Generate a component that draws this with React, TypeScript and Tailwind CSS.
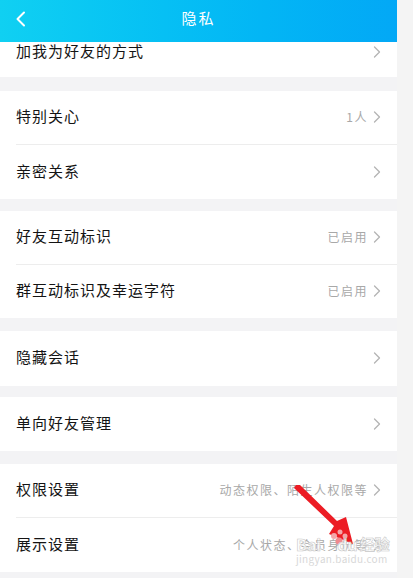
import React from 'react';

interface Row {
  label: string;
  value?: string;
  h: string;
}

const Chevron: React.FC<{ color?: string }> = ({ color = '#b4b4b4' }) => (
  <svg width="8" height="12" viewBox="0 0 8 12" fill="none" className="shrink-0">
    <path d="M1.5 1 L6.5 6 L1.5 11" stroke={color} strokeWidth="1.3" strokeLinecap="round" strokeLinejoin="round" />
  </svg>
);

const SettingRow: React.FC<{ row: Row; divider?: boolean }> = ({ row, divider }) => (
  <div className="relative">
    <div className={`flex items-center justify-between pl-4 pr-4 pb-[3px] ${row.h}`}>
      <span className="text-[15px] tracking-[1px] text-[#141414] leading-5">{row.label}</span>
      <div className="flex items-center gap-[5px] pt-[2px]">
        {row.value && <span className="text-[12px] tracking-[1.5px] text-[#a8a8a8] leading-4">{row.value}</span>}
        <Chevron />
      </div>
    </div>
    {divider && <div className="ml-4 h-px bg-[#ededed]" />}
  </div>
);

const Section: React.FC<{ rows: Row[]; gap: string }> = ({ rows, gap }) => (
  <div className={`bg-white ${gap}`}>
    {rows.map((r, i) => (
      <SettingRow key={r.label} row={r} divider={i < rows.length - 1} />
    ))}
  </div>
);

const App: React.FC = () => {
  return (
    <div
      className="relative flex w-[413px] h-[578px] overflow-hidden bg-[#f3f3f5]"
      style={{ fontFamily: '"Noto Sans CJK SC", "Noto Sans", sans-serif' }}
    >
      <div className="w-[397px] flex flex-col">
        {/* header */}
        <div className="relative h-[42px] flex items-center justify-center pb-[5px] bg-gradient-to-r from-[#10d0f2] to-[#03a8f6]">
          <svg width="12" height="16" viewBox="0 0 12 16" fill="none" className="absolute left-[15px] top-[11px]">
            <path d="M9 1.5 L2.5 8 L9 14.5" stroke="white" strokeWidth="2" strokeLinecap="round" strokeLinejoin="round" />
          </svg>
          <span className="text-white text-[15px] tracking-[2px]">隐私</span>
        </div>

        {/* partially scrolled row */}
        <div className="bg-white h-[36px] flex items-start justify-between pl-4 pr-4 -mt-px">
          <span className="text-[15px] tracking-[1px] text-[#141414] leading-5">加我为好友的方式</span>
          <div className="h-5 flex items-center pt-[2px]">
            <Chevron />
          </div>
        </div>

        <Section
          gap="mt-[14px]"
          rows={[
            { label: '特别关心', value: '1人', h: 'h-[53px]' },
            { label: '亲密关系', h: 'h-[54px]' },
          ]}
        />
        <Section
          gap="mt-[12px]"
          rows={[
            { label: '好友互动标识', value: '已启用', h: 'h-[53px]' },
            { label: '群互动标识及幸运字符', value: '已启用', h: 'h-[53px]' },
          ]}
        />
        <Section gap="mt-[13px]" rows={[{ label: '隐藏会话', h: 'h-[55px]' }]} />
        <Section gap="mt-[11px]" rows={[{ label: '单向好友管理', h: 'h-[54px]' }]} />
        <Section
          gap="mt-[13px]"
          rows={[
            { label: '权限设置', value: '动态权限、陌生人权限等', h: 'h-[53px]' },
            { label: '展示设置', value: '个人状态、会员身份等', h: 'h-[54px]' },
          ]}
        />
      </div>
      <div className="flex-1 bg-[#f4f4f4]" />

      {/* annotation arrow */}
      <svg width="413" height="578" viewBox="0 0 413 578" className="absolute inset-0 pointer-events-none">
        <polygon points="296,485 300,485 337,521 346,517 353,544 329,534 334,526 294,488" fill="#ec1c24" />
        <circle cx="334" cy="536" r="3" fill="#f4a7aa" />
        <circle cx="340" cy="532" r="2.5" fill="#f4a7aa" />
        <circle cx="345" cy="536" r="2.5" fill="#f4a7aa" />
        <circle cx="339" cy="541" r="3.5" fill="#f0898e" />
      </svg>

      {/* watermark */}
      <div className="absolute left-[296px] top-[535px] flex flex-col items-start pointer-events-none">
        <div className="flex items-center text-[16px] font-bold leading-[18px] text-white/80" style={{ WebkitTextStroke: '0.6px #c8c8c8' }}>
          <span>Bai</span>
          <span className="w-[16px]" />
          <span>du</span>
          <span className="ml-[2px] text-[15px]">经验</span>
        </div>
        <span className="text-[10px] leading-3 text-[#d8d8d8] tracking-[0.3px]">jingyan.baidu.com</span>
      </div>
    </div>
  );
};

export default App;
